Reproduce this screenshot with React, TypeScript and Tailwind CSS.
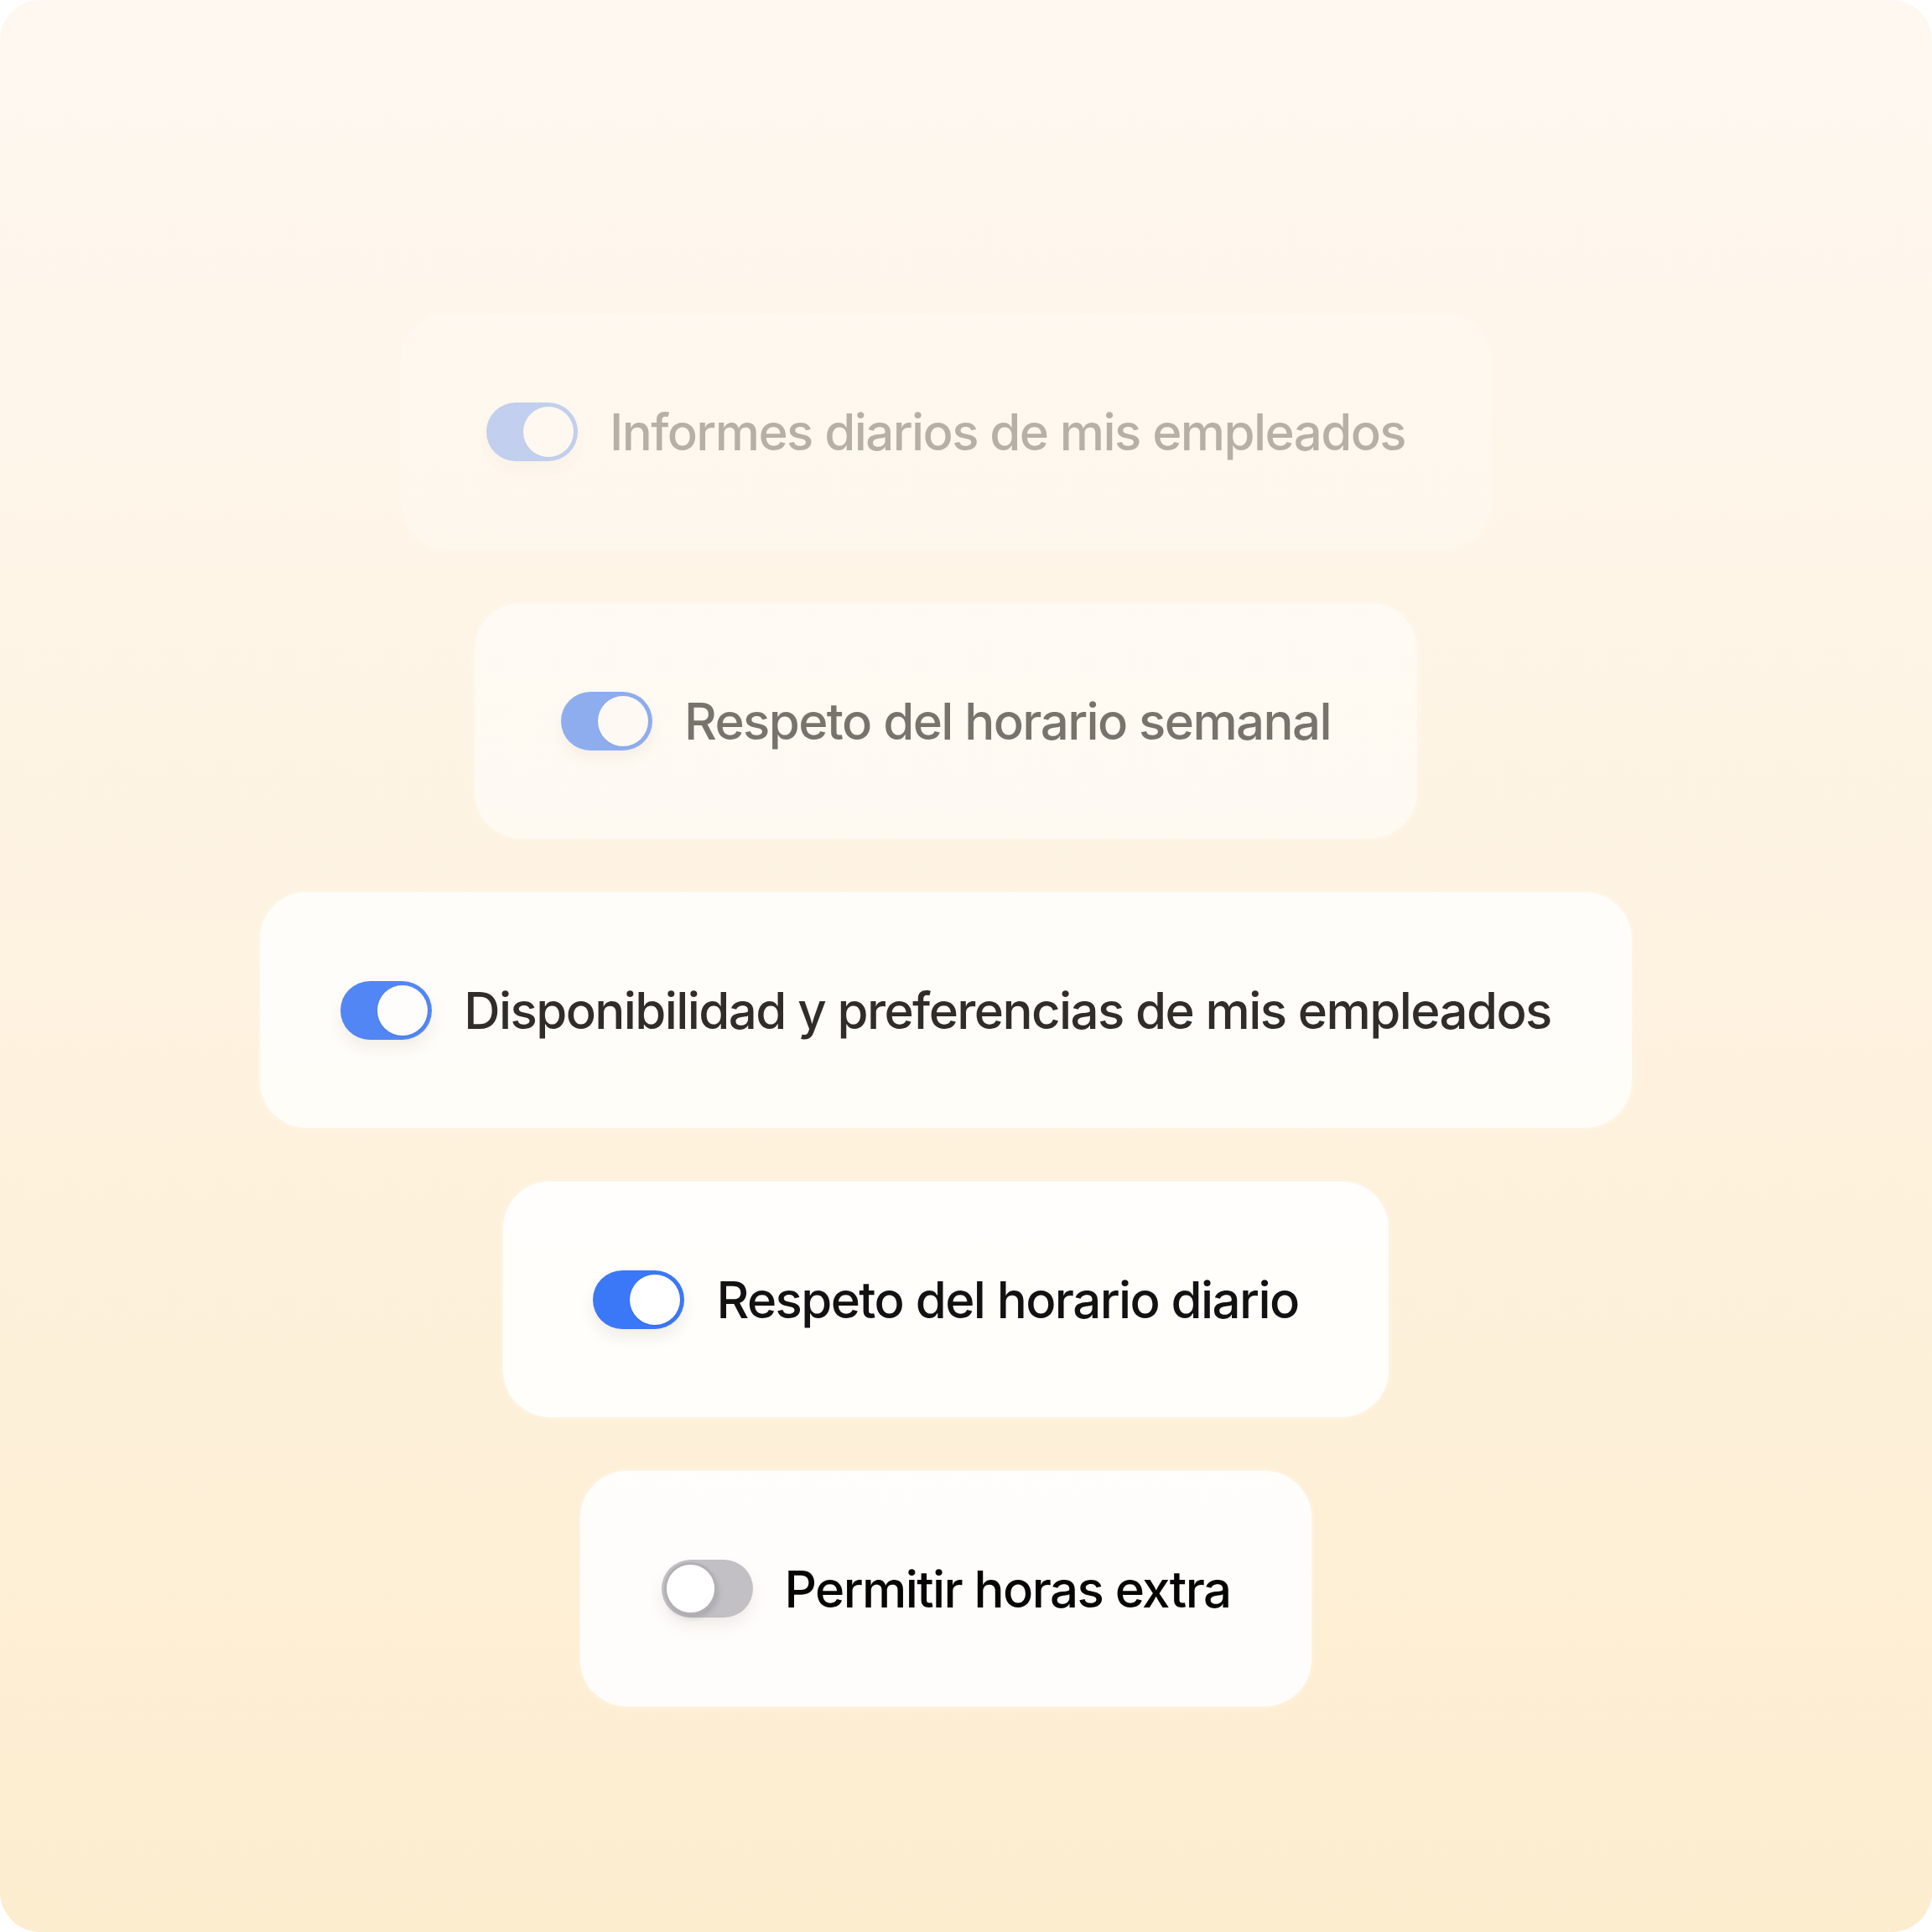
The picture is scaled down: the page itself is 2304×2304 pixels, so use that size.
import React from 'react';

type Row = {
  label: string;
  on: boolean;
  card: string;
  text: string;
};

const rows: Row[] = [
  {
    label: 'Informes diarios de mis empleados',
    on: true,
    card: 'w-[1300px] opacity-30 blur-[0.6px] bg-white/70',
    text: 'text-[#141210]',
  },
  {
    label: 'Respeto del horario semanal',
    on: true,
    card: 'w-[1124px] opacity-[0.57] bg-white/90',
    text: 'text-[#141210]',
  },
  {
    label: 'Disponibilidad y preferencias de mis empleados',
    on: true,
    card: 'w-[1636px] opacity-[0.88] bg-white/90',
    text: 'text-[#141210]',
  },
  {
    label: 'Respeto del horario diario',
    on: true,
    card: 'w-[1056px] bg-white/90',
    text: 'text-[#121212]',
  },
  {
    label: 'Permitir horas extra',
    on: false,
    card: 'w-[872px] bg-white/90',
    text: 'text-[#050505]',
  },
];

function Toggle({ on }: { on: boolean }) {
  if (on) {
    return (
      <div className="flex h-[70px] w-[109px] shrink-0 items-center justify-end rounded-full bg-[#3b78f8] p-[5px] shadow-[0_10px_18px_rgba(60,40,20,0.08)]">
        <div className="h-[60px] w-[60px] rounded-full bg-white shadow-[0_1px_2px_rgba(40,60,140,0.25)]" />
      </div>
    );
  }
  return (
    <div className="flex h-[69px] w-[109px] shrink-0 items-center justify-start rounded-full bg-[#c2c0c4] p-[3px] shadow-[0_10px_18px_rgba(60,40,20,0.08)]">
      <div className="h-[63px] w-[63px] rounded-full border-[3px] border-[#b2b0b4] bg-white shadow-[2px_4px_6px_rgba(0,0,0,0.12)]" />
    </div>
  );
}

export default function App() {
  return (
    <div className="h-[2304px] w-[2304px] bg-white">
      <div
        className="flex h-full w-full flex-col items-center gap-[64px] rounded-[48px] bg-linear-to-b from-[#fef8f1] to-[#fdedcf] pr-[48px] pt-[374px]"
        style={{ fontFamily: 'Inter, "Noto Sans", sans-serif' }}
      >
        {rows.map((row) => (
          <div
            key={row.label}
            className={`flex h-[281px] items-center justify-center gap-[38px] rounded-[56px] shadow-[0_0_6px_rgba(255,255,255,0.6)] ${row.card}`}
          >
            <Toggle on={row.on} />
            <span className={`whitespace-nowrap text-[60px] font-medium leading-none tracking-[-1.6px] ${row.text}`}>
              {row.label}
            </span>
          </div>
        ))}
      </div>
    </div>
  );
}
